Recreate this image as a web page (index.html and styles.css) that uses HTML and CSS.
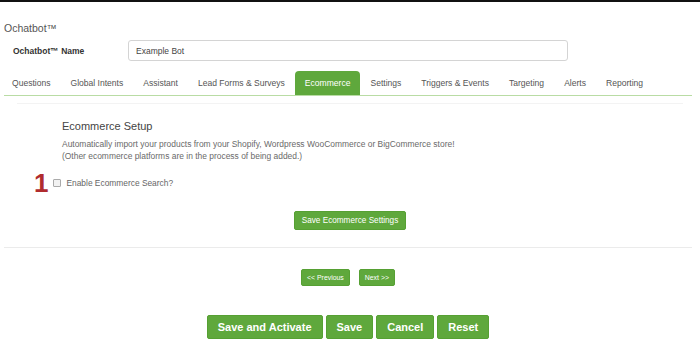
FILE: index.html
```html
<!DOCTYPE html>
<html lang="en">

<head>
    <meta charset="UTF-8">
    <meta name="viewport" content="width=device-width, initial-scale=1.0">
    <title>Ochatbot</title>
    <link rel="stylesheet" href="styles.css">
</head>

<body>
    <div class="topbar"></div>
    <div class="page">
        <h1 class="title">Ochatbot™</h1>
        <div class="name-row">
            <label class="name-label">Ochatbot™ Name</label>
            <input type="text" class="name-input" value="Example Bot">
        </div>

        <ul class="tabs">
            <li>Questions</li>
            <li>Global Intents</li>
            <li>Assistant</li>
            <li>Lead Forms &amp; Surveys</li>
            <li class="active">Ecommerce</li>
            <li>Settings</li>
            <li>Triggers &amp; Events</li>
            <li>Targeting</li>
            <li>Alerts</li>
            <li>Reporting</li>
        </ul>

        <div class="panel">
            <div class="setup">
                <h2>Ecommerce Setup</h2>
                <p class="desc">Automatically import your products from your Shopify, Wordpress WooCommerce or BigCommerce store!<br>(Other ecommerce platforms are in the process of being added.)</p>
            </div>
            <div class="check-row">
                <span class="step">1</span>
                <input type="checkbox" class="check" id="ecom">
                <label for="ecom">Enable Ecommerce Search?</label>
            </div>
            <div class="center">
                <button class="btn">Save Ecommerce Settings</button>
            </div>
        </div>

        <hr class="divider">

        <div class="center pager">
            <button class="btn small">&lt;&lt; Previous</button>
            <button class="btn small">Next &gt;&gt;</button>
        </div>

        <div class="center actions">
            <button class="btn big">Save and Activate</button>
            <button class="btn big">Save</button>
            <button class="btn big">Cancel</button>
            <button class="btn big">Reset</button>
        </div>
    </div>
</body>

</html>
```

FILE: styles.css
```css
* {
    margin: 0;
    padding: 0;
    box-sizing: border-box;
    font-family: "Liberation Sans", Arial, sans-serif;
}

body {
    background: #fff;
    color: #555;
}

.topbar {
    height: 2px;
    background: #111;
}

.page {
    padding: 0 8px 0 4px;
}

.title {
    margin-top: 18px;
    font-size: 10.5px;
    line-height: 16px;
    font-weight: normal;
    color: #555;
}

.name-row {
    display: flex;
    align-items: center;
    margin-top: 4px;
    height: 21px;
}

.name-label {
    width: 124px;
    padding-left: 9px;
    font-size: 8.5px;
    font-weight: bold;
    color: #333;
}

.name-input {
    width: 440px;
    height: 21px;
    border: 1px solid #d4d4d4;
    border-radius: 3px;
    padding-left: 7px;
    font-size: 8.5px;
    color: #444;
    outline: 0;
}

.tabs {
    display: flex;
    list-style: none;
    margin-top: 10px;
    height: 25px;
    border-bottom: 1px solid #b9dca4;
}

.tabs li {
    padding: 0 10px;
    line-height: 24px;
    font-size: 8.55px;
    white-space: nowrap;
    color: #555;
}

.tabs li:first-child {
    margin-left: -2px;
}

.tabs li.active {
    background: #5fa83c;
    color: #fff;
    border-radius: 4px 4px 0 0;
}

.panel {
    margin: 7px 9px 0 13px;
    border-top: 1px solid #f3f3f3;
}

.setup {
    padding-left: 45px;
}

.setup h2 {
    margin-top: 14px;
    font-size: 11px;
    line-height: 16px;
    font-weight: normal;
    color: #444;
}

.desc {
    margin-top: 4px;
    font-size: 8.45px;
    line-height: 12px;
    color: #6a6a6a;
}

.check-row {
    display: flex;
    align-items: center;
    margin-top: 11px;
    height: 20px;
}

.step {
    margin-left: 17px;
    font-size: 26px;
    line-height: 20px;
    font-weight: bold;
    color: #b02c2e;
}

.check {
    appearance: none;
    width: 8px;
    height: 8px;
    margin-left: 5px;
    border: 1px solid #aaa;
    border-radius: 1px;
    background: #f2f2f2;
}

.check-row label {
    margin-left: 5px;
    font-size: 8.4px;
    color: #666;
}

.center {
    display: flex;
    justify-content: center;
}

.panel .center {
    margin-top: 18px;
}

.btn {
    border: 1px solid #56a033;
    background: #5fa83c;
    color: #fff;
    border-radius: 2px;
    height: 19px;
    padding: 0 7px;
    font-size: 8.2px;
}

.divider {
    border: 0;
    border-top: 1px solid #ebebeb;
    margin-top: 17px;
}

.pager {
    margin-top: 21px;
    gap: 9px;
}

.btn.small {
    height: 17px;
    padding: 0 5px;
    font-size: 6.9px;
}

.actions {
    margin-top: 29px;
    gap: 3px;
}

.btn.big {
    height: 24px;
    padding: 0 10px;
    font-size: 11px;
    font-weight: bold;
}
```
